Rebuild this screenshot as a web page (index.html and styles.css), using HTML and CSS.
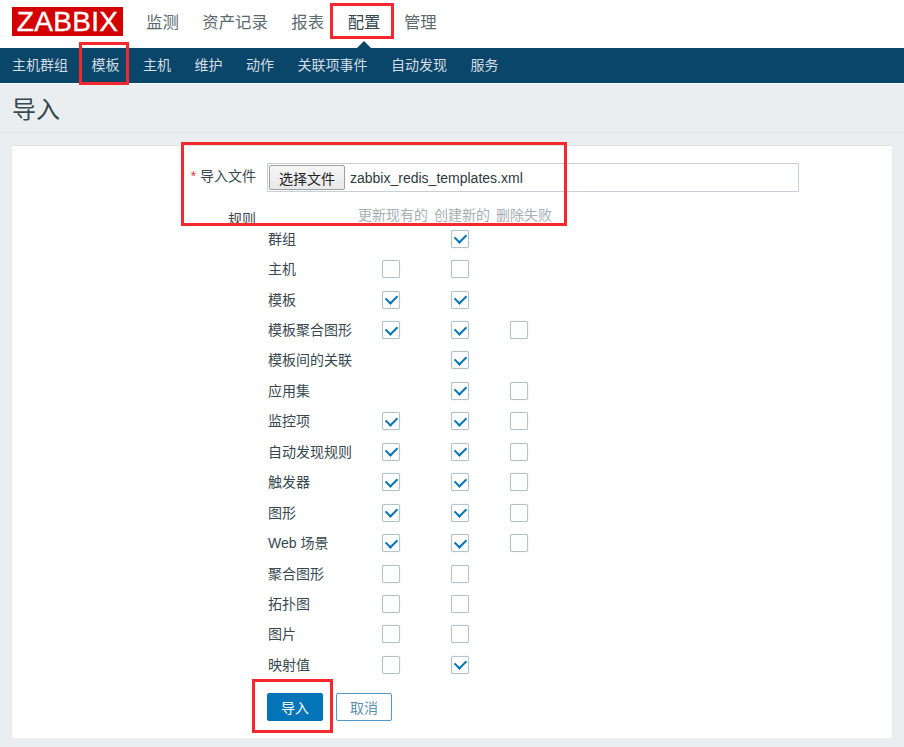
FILE: index.html
```html
<!DOCTYPE html>
<html lang="zh">
<head>
<meta charset="utf-8">
<title>导入</title>
<link rel="stylesheet" href="styles.css">
</head>
<body>
<header class="topbar">
  <div class="logo">ZABBIX</div>
  <nav class="mainnav">
    <a>监测</a><a>资产记录</a><a>报表</a><a class="active">配置</a><a>管理</a>
  </nav>
</header>
<nav class="subnav">
  <a>主机群组</a><a>模板</a><a>主机</a><a>维护</a><a>动作</a><a>关联项事件</a><a>自动发现</a><a>服务</a>
</nav>
<div class="titlebar"><h1>导入</h1></div>
<main class="panel">
  <div class="filerow">
    <label class="filelabel"><span class="req">*</span> 导入文件</label>
    <div class="filefield"><button class="choose">选择文件</button><span class="filename">zabbix_redis_templates.xml</span></div>
  </div>
  <div class="ruleshead">
    <span class="ruleslabel">规则</span>
    <span class="colheads"><span>更新现有的</span><span>创建新的</span><span>删除失败</span></span>
  </div>
  <div class="rules">
    <div class="row"><span class="name">群组</span><i></i><i class="box on"></i><i></i></div>
    <div class="row"><span class="name">主机</span><i class="box"></i><i class="box"></i><i></i></div>
    <div class="row"><span class="name">模板</span><i class="box on"></i><i class="box on"></i><i></i></div>
    <div class="row"><span class="name">模板聚合图形</span><i class="box on"></i><i class="box on"></i><i class="box"></i></div>
    <div class="row"><span class="name">模板间的关联</span><i></i><i class="box on"></i><i></i></div>
    <div class="row"><span class="name">应用集</span><i></i><i class="box on"></i><i class="box"></i></div>
    <div class="row"><span class="name">监控项</span><i class="box on"></i><i class="box on"></i><i class="box"></i></div>
    <div class="row"><span class="name">自动发现规则</span><i class="box on"></i><i class="box on"></i><i class="box"></i></div>
    <div class="row"><span class="name">触发器</span><i class="box on"></i><i class="box on"></i><i class="box"></i></div>
    <div class="row"><span class="name">图形</span><i class="box on"></i><i class="box on"></i><i class="box"></i></div>
    <div class="row"><span class="name">Web 场景</span><i class="box on"></i><i class="box on"></i><i class="box"></i></div>
    <div class="row"><span class="name">聚合图形</span><i class="box"></i><i class="box"></i><i></i></div>
    <div class="row"><span class="name">拓扑图</span><i class="box"></i><i class="box"></i><i></i></div>
    <div class="row"><span class="name">图片</span><i class="box"></i><i class="box"></i><i></i></div>
    <div class="row"><span class="name">映射值</span><i class="box"></i><i class="box on"></i><i></i></div>
  </div>
  <div class="actions">
    <button class="primary">导入</button><button class="secondary">取消</button>
  </div>
</main>
<div class="mark mark-config"></div>
<div class="mark mark-template"></div>
<div class="mark mark-file"></div>
<div class="mark mark-import"></div>
</body>
</html>
```
FILE: styles.css
```css
* { box-sizing: border-box; }
html, body { margin: 0; height: 747px; overflow: hidden; }
body {
  position: relative;
  background: #ebeef0;
  color: #374850;
  font-family: "Liberation Sans", "Noto Sans CJK SC", sans-serif;
  font-size: 14px;
}
.topbar {
  height: 48px;
  background: #fff;
  display: flex;
  align-items: flex-start;
  padding: 7px 0 0 12px;
}
.logo {
  width: 111px;
  height: 29px;
  background: #d40000;
  color: #fff;
  font-size: 28px;
  line-height: 30px;
  text-align: center;
  letter-spacing: 0.3px;
  -webkit-text-stroke: 0.4px #fff;
}
.mainnav {
  display: flex;
  gap: 23.5px;
  margin-left: 23px;
  font-size: 16.4px;
  line-height: 30px;
  color: #5b6a70;
}
.mainnav .active { color: #374850; position: relative; }
.mainnav .active::after {
  content: "";
  position: absolute;
  left: 50%;
  top: 34px;
  margin-left: -9px;
  border: 9px solid transparent;
  border-top: 0;
  border-bottom-color: #0a466a;
}
.subnav {
  height: 35px;
  background: #0a466a;
  display: flex;
  gap: 23.5px;
  padding-left: 12px;
  color: #d3dde3;
  line-height: 34px;
}
.titlebar {
  height: 50px;
  border-top: 1px solid #f6f7f8;
  border-bottom: 1px solid #dfe3e6;
  padding-left: 12px;
}
h1 {
  margin: 0;
  font-weight: 400;
  font-size: 24px;
  line-height: 52px;
  color: #374850;
}
.panel {
  margin: 12px 12px 0;
  height: 593px;
  background: #fff;
  border-top: 1px solid #dfe3e6;
  padding-top: 17px;
}
.filerow { display: flex; align-items: flex-start; }
.filelabel {
  width: 244px;
  text-align: right;
  line-height: 26px;
}
.req { color: #dc3545; }
.filefield {
  margin-left: 11px;
  width: 532px;
  height: 29px;
  border: 1px solid #c7d0d6;
  display: flex;
  align-items: center;
  padding-left: 1px;
  color: #2d3a40;
}
.choose {
  width: 76px;
  height: 25px;
  padding: 0;
  border: 1px solid #9aa0a4;
  border-radius: 2px;
  background: linear-gradient(#f6f6f6, #e8e8e8);
  color: #222;
  font: inherit;
}
.filename { margin-left: 5px; }
.ruleshead { display: flex; height: 23px; margin-top: 13px; position: relative; }
.ruleslabel { width: 244px; text-align: right; line-height: 28px; height: 28px; }
.colheads {
  display: flex;
  gap: 6px;
  margin-left: 102px;
  color: #a5afb5;
  line-height: 20px;
}
.rules { margin-left: 256px; margin-top: -4.5px; }
.row {
  display: grid;
  grid-template-columns: 113.5px 69px 59.5px 18px;
  height: 30.45px;
  align-items: center;
}
.name { margin-bottom: 2px; }
.row i { display: block; width: 18px; height: 18px; }
.box {
  border: 1px solid #b4c2cb;
  border-radius: 2px;
  background: #fff;
  box-shadow: 0 0 1px #b4c2cb;
  position: relative;
}
.box.on::after {
  content: "";
  position: absolute;
  left: 3.5px;
  top: 2.5px;
  width: 9px;
  height: 6px;
  border-left: 2.5px solid #0275b8;
  border-bottom: 2.5px solid #0275b8;
  transform: rotate(-45deg);
}
.actions { display: flex; gap: 13px; margin-left: 255px; margin-top: 12.5px; }
.actions button {
  height: 28px;
  padding: 0;
  border-radius: 2px;
  font: inherit;
}
.primary { width: 56px; background: #0275b8; border: 1px solid #0275b8; color: #fff; }
.secondary { width: 56px; background: #fff; border: 1px solid #4e9bcb; color: #5b8fae; }
.mark { position: absolute; border: 3px solid #f5282e; }
.mark-config { left: 330px; top: 3px; width: 64px; height: 36px; }
.mark-template { left: 79px; top: 42px; width: 50px; height: 43px; }
.mark-file { left: 181px; top: 142px; width: 386px; height: 84px; }
.mark-import { left: 252px; top: 679px; width: 81px; height: 54px; }
```
